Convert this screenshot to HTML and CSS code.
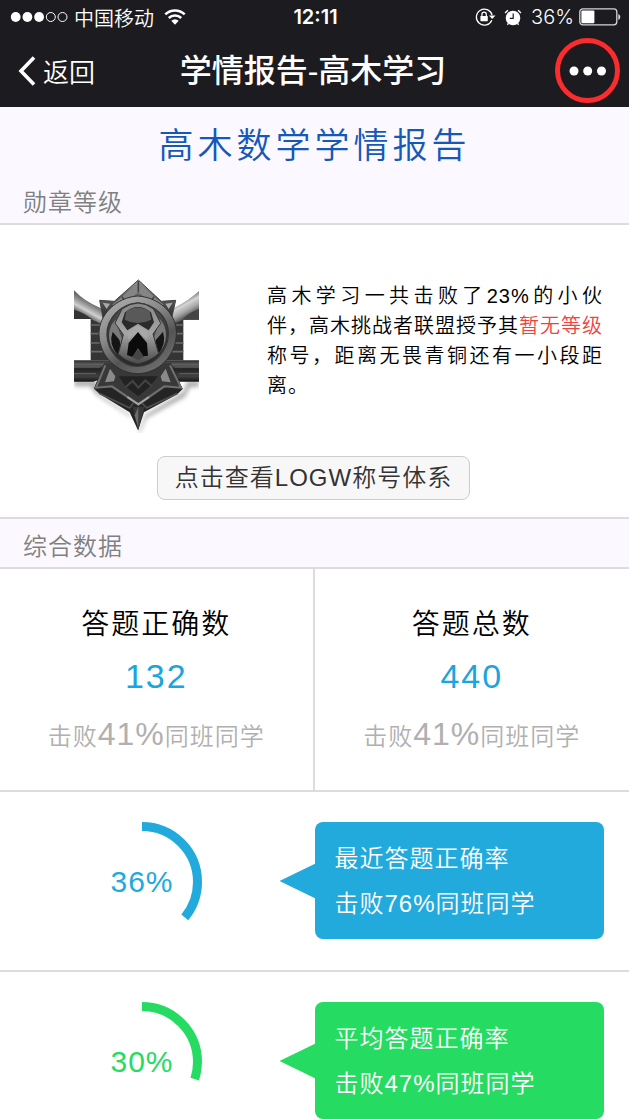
FILE: index.html
```html
<!DOCTYPE html>
<html lang="zh-CN">
<head>
<meta charset="utf-8">
<meta name="viewport" content="width=device-width, initial-scale=1">
<title>学情报告-高木学习</title>
<link rel="stylesheet" href="styles.css">
</head>
<body>
<header class="topbar">
  <div class="status">
    <div class="status-left">
      <svg class="signal" width="59" height="12" viewBox="0 0 59 12" aria-hidden="true">
        <g fill="#fff"><circle cx="5.7" cy="6" r="4.9"/><circle cx="17.4" cy="6" r="4.9"/><circle cx="29.1" cy="6" r="4.9"/></g>
        <g fill="none" stroke="#fff"><circle cx="40.8" cy="6" r="4.5"/><circle cx="52.5" cy="6" r="4.5"/></g>
      </svg>
      <span>中国移动</span>
      <svg width="22" height="16" viewBox="0 0 22 16" aria-hidden="true">
        <g fill="none" stroke="#fff" stroke-width="2.5"><path d="M1.3 5.4a13.8 13.8 0 0 1 19.4 0"/><path d="M4.8 9a8.8 8.8 0 0 1 12.4 0"/></g>
        <path d="M11 15.7 7.3 11.7a5.3 5.3 0 0 1 7.4 0z" fill="#fff"/>
      </svg>
    </div>
    <time class="clock">12:11</time>
    <div class="status-right">
      <svg class="lock" width="21" height="18" viewBox="0 0 21 18" aria-hidden="true">
        <path d="M16.8 12.2A8 8 0 1 1 17.1 7" fill="none" stroke="#fff" stroke-width="1.3"/>
        <path d="M14 7.5h6.5L17.2 11z" fill="#fff"/>
        <rect x="5.4" y="8" width="7.4" height="5.2" rx=".6" fill="#fff"/>
        <path d="M6.9 8V6.4a2.2 2.2 0 0 1 4.4 0V8" fill="none" stroke="#fff" stroke-width="1.2"/>
      </svg>
      <svg class="alarm" width="18" height="17" viewBox="0 0 18 17" aria-hidden="true">
        <circle cx="9" cy="9" r="7.3" fill="#fff"/>
        <path d="M1.2 4.1A9 9 0 0 1 4 1.4M16.8 4.1A9 9 0 0 0 14 1.4" stroke="#fff" stroke-width="1.4" fill="none"/>
        <path d="M4.4 14.4l-1 1.3M13.6 14.4l1 1.3" stroke="#fff" stroke-width="1.4"/>
        <path d="M9.2 4.5v4.8H5.8" fill="none" stroke="#1c1b20" stroke-width="1.2"/>
      </svg>
      <span>36%</span>
      <svg width="42" height="18" viewBox="0 0 42 18" aria-hidden="true">
        <rect x=".8" y=".8" width="37" height="16" rx="3" fill="none" stroke="#d5d5d7" stroke-width="1.3"/>
        <path d="M39.3 6c2.6 1 2.6 5 0 6z" fill="#d5d5d7"/>
        <rect x="2.4" y="2.6" width="13" height="12.6" rx="1" fill="#fff"/>
      </svg>
    </div>
  </div>
  <nav class="nav">
    <a class="back" href="#">
      <svg width="18" height="30" viewBox="0 0 18 30" aria-hidden="true"><path d="M16 1.5 3 15l13 13.5" fill="none" stroke="#fff" stroke-width="3.6"/></svg>
      <span>返回</span>
    </a>
    <h1 class="nav-title">学情报告-高木学习</h1>
    <button class="more" type="button" aria-label="更多">
      <svg width="38" height="10" viewBox="0 0 38 10" aria-hidden="true"><g fill="#fff"><circle cx="5" cy="5" r="4.5"/><circle cx="18.7" cy="5" r="4.5"/><circle cx="32.5" cy="5" r="4.5"/></g></svg>
    </button>
  </nav>
</header>
<main>
  <h2 class="report-title">高木数学学情报告</h2>
  <h3 class="section-head">勋章等级</h3>
  <section class="medal">
    <div class="medal-body">
      <svg class="badge" viewBox="72 55 375 465" role="img" aria-label="徽章">
        <defs>
          <linearGradient id="steel" x1="0" y1="0" x2="0" y2="1"><stop offset="0" stop-color="#999"/><stop offset=".45" stop-color="#5a5a5a"/><stop offset="1" stop-color="#292929"/></linearGradient>
          <linearGradient id="ring" x1="0" y1="0" x2=".6" y2="1"><stop offset="0" stop-color="#b5b5b5"/><stop offset=".45" stop-color="#8a8a8a"/><stop offset=".75" stop-color="#555"/><stop offset="1" stop-color="#6a6a6a"/></linearGradient>
          <linearGradient id="bladeL" gradientUnits="userSpaceOnUse" x1="130" y1="118" x2="100" y2="172"><stop offset="0" stop-color="#444"/><stop offset=".35" stop-color="#8a8a8a"/><stop offset=".65" stop-color="#d0d0d0"/><stop offset="1" stop-color="#444"/></linearGradient>
          <linearGradient id="bladeR" gradientUnits="userSpaceOnUse" x1="390" y1="118" x2="420" y2="172"><stop offset="0" stop-color="#555"/><stop offset=".35" stop-color="#d5d5d5"/><stop offset=".65" stop-color="#a5a5a5"/><stop offset="1" stop-color="#444"/></linearGradient>
          <linearGradient id="bar" x1="0" y1="0" x2="0" y2="1"><stop offset="0" stop-color="#2a2a2a"/><stop offset=".2" stop-color="#606060"/><stop offset=".4" stop-color="#222"/><stop offset=".75" stop-color="#404040"/><stop offset="1" stop-color="#151515"/></linearGradient>
          <radialGradient id="orb" cx=".5" cy=".3" r=".7"><stop offset="0" stop-color="#777"/><stop offset=".5" stop-color="#484848"/><stop offset="1" stop-color="#262626"/></radialGradient>
          <linearGradient id="mark" x1="0" y1="0" x2="0" y2="1"><stop offset="0" stop-color="#858585"/><stop offset=".5" stop-color="#a5a5a5"/><stop offset="1" stop-color="#4a4a4a"/></linearGradient>
          <filter id="soft" x="-20%" y="-20%" width="140%" height="140%"><feGaussianBlur stdDeviation="6"/></filter>
        </defs>
        <path d="M72 362H138L150 404 240 465 266 516 286 465 400 396 412 364H447V382H420L405 412 290 475 268 522 246 475 140 406 120 380H72z" fill="#777" opacity=".6" filter="url(#soft)"/>
        <path d="M122 150H400V302H122z" fill="#353535"/>
        <path d="M122 196h36M122 222h30M122 250h30M122 276h36M400 196h-36M400 222h-30M400 250h-30M400 276h-36" stroke="#6a6a6a" stroke-width="5"/>
        <path d="M72 302H447V366H390L350 350H176L130 366H72z" fill="url(#bar)"/>
        <path d="M72 322H150M72 342H138M447 322H374M447 342H388" stroke="#666" stroke-width="3"/>
        <path d="M72 92Q104 126 150 144L178 160 160 196 122 178H72z" fill="url(#bladeL)"/>
        <path d="M447 94Q416 122 378 142L346 160 362 196 400 180H447z" fill="url(#bladeR)"/>
        <path d="M72 150Q104 160 126 178H72z" fill="#333"/>
        <path d="M447 148Q420 156 396 180H447z" fill="#444"/>
        <path d="M149 122 193 125 265 61 334 125 377 122 364 180H160z" fill="url(#steel)" stroke="#444" stroke-width="3"/>
        <path d="M187 135 265 70 341 135 320 143 265 98 208 143z" fill="#858585"/>
        <path d="M265 64V98M216 111l12 19M312 111l-12 19" stroke="#444" stroke-width="5"/>
        <path d="M158 129 180 132 170 148zM368 129 346 132 356 148z" fill="#aaa"/>
        <path d="M163 310 132 387 149 403 239 458 264 512 282 458 382 404 398 388 362 310z" fill="#242424"/>
        <path d="M163 310 132 387 183 384 265 440 347 383 398 388 362 310z" fill="#383838"/>
        <path d="M166 317 138 384 186 380 265 434 343 380 393 384 360 317" fill="none" stroke="#707070" stroke-width="6"/>
        <path d="M232 412 265 434 297 412" fill="none" stroke="#a5a5a5" stroke-width="6"/>
        <path d="M180 327 165 368 192 365 196 350zM347 327 362 368 336 365 332 350z" fill="#8a8a8a"/>
        <path d="M206 350H324L300 380 265 410 226 380z" fill="#222"/>
        <path d="M226 383 248 364 265 384 286 362 306 380" fill="none" stroke="#444" stroke-width="6"/>
        <path d="M147 401 239 445 250 430M383 401 290 445 276 430" fill="none" stroke="#505050" stroke-width="5"/>
        <path d="M248 441H283L265 512z" fill="#383838"/><path d="M265 441V506L254 467z" fill="#6b6b6b"/>
        <path d="M263 109C330 113 383 165 379 226C375 292 324 341 263 342C203 341 150 292 147 227C144 164 201 113 263 109z" fill="url(#ring)" stroke="#303030" stroke-width="3"/>
        <path d="M263 130C314 134 357 173 355 224C353 274 313 319 263 320C212 319 173 275 171 226C170 174 213 134 263 130z" fill="url(#orb)" stroke="#383838" stroke-width="4"/>
        <path d="M200 178C166 203 172 265 206 286L218 242 206 211zM328 178C359 203 352 265 320 286L308 242 320 211z" fill="#7a7a7a"/>
        <path d="M188 216 208 240 212 256 204 286Q174 254 188 216zM339 216 318 240 312 256 322 286Q351 254 339 216z" fill="#151515"/>
        <path d="M216 148Q264 112 311 148L332 191 309 223 326 282Q300 305 265 313Q225 306 205 282L220 225 195 190z" fill="url(#mark)" stroke="#343434" stroke-width="3"/>
        <path d="M225 158Q264 126 303 158L312 188 296 212 264 192 232 212 215 188z" fill="#2a2a2a"/>
        <path d="M229 154Q264 133 299 155L304 180Q262 200 224 180z" fill="#595959"/>
        <path d="M238 214 264 196 290 214 294 240 264 216 234 240z" fill="#a8a8a8"/>
        <path d="M236 250 264 217 291 250 294 288 280 290 264 266 248 292 231 286z" fill="#0b0b0b"/>
        <path d="M246 292 264 268 282 292 264 302z" fill="#454545"/>
      </svg>
      <p class="medal-text">高木学习一共击败了23%的小伙伴，高木挑战者联盟授予其<em class="rank">暂无等级</em>称号，距离无畏青铜还有一小段距离。</p>
    </div>
    <button class="rank-button" type="button">点击查看LOGW称号体系</button>
  </section>
  <h3 class="section-head section-head-lined">综合数据</h3>
  <section class="stats">
    <div class="stat">
      <h4 class="stat-name">答题正确数</h4>
      <p class="stat-value">132</p>
      <p class="stat-note">击败<span class="stat-percent">41%</span>同班同学</p>
    </div>
    <div class="stat">
      <h4 class="stat-name">答题总数</h4>
      <p class="stat-value">440</p>
      <p class="stat-note">击败<span class="stat-percent">41%</span>同班同学</p>
    </div>
  </section>
  <section class="rate rate-recent">
    <div class="gauge">
      <svg class="arc" viewBox="0 0 120 120" aria-hidden="true"><circle cx="60" cy="60" r="55.5" pathLength="100" stroke-dasharray="36 64" transform="rotate(-90 60 60)"/></svg>
      <span class="gauge-value">36%</span>
    </div>
    <div class="bubble"><p>最近答题正确率</p><p>击败76%同班同学</p></div>
  </section>
  <section class="rate rate-average">
    <div class="gauge">
      <svg class="arc" viewBox="0 0 120 120" aria-hidden="true"><circle cx="60" cy="60" r="55.5" pathLength="100" stroke-dasharray="30 70" transform="rotate(-90 60 60)"/></svg>
      <span class="gauge-value">30%</span>
    </div>
    <div class="bubble"><p>平均答题正确率</p><p>击败47%同班同学</p></div>
  </section>
</main>
</body>
</html>
```
FILE: styles.css
```css
* { box-sizing: border-box; }
body, h1, h2, h3, h4, p { margin: 0; }
body {
  background: #fff;
  color: #000;
  font-family: "Liberation Sans", "Noto Sans CJK SC", sans-serif;
  font-size: 24px;
  font-weight: 350;
  letter-spacing: 1px;
}
h1, h2, h3, h4 { font-weight: inherit; }
svg { display: block; flex: none; }
button { font: inherit; letter-spacing: inherit; cursor: pointer; }

.topbar { background: #1c1b20; color: #fff; letter-spacing: 0; }
.status {
  display: grid;
  grid-template-columns: 1fr auto 1fr;
  align-items: center;
  height: 34px;
  padding: 0 8px 0 10px;
  font-family: Inter, "Noto Sans CJK SC", sans-serif;
  font-size: 20px;
}
.status-left, .status-right { display: flex; align-items: center; }
.status-left { gap: 10px; }
.signal { margin-right: -5px; }
.status-right { justify-content: flex-end; gap: 5px; }
.lock { margin-right: 3px; }
.alarm { margin-right: 4px; }
.clock { font-weight: 600; }
.nav {
  display: grid;
  grid-template-columns: 1fr auto 1fr;
  align-items: center;
  height: 73px;
  padding: 0 9px 0 18px;
}
.back {
  display: flex;
  align-items: center;
  gap: 7px;
  color: #fff;
  font-size: 26px;
  text-decoration: none;
}
.nav-title { margin-right: 12px; font-size: 32px; font-weight: 500; line-height: 40px; }
.more {
  display: flex;
  align-items: center;
  justify-content: center;
  justify-self: end;
  width: 65px;
  height: 65px;
  padding: 0;
  border: 5px solid #fb2c2d;
  border-radius: 50%;
  background: none;
}

.report-title {
  padding: 14px 0 12px;
  background: #fbf9ff;
  color: #1558b8;
  font-size: 35px;
  line-height: 50px;
  letter-spacing: 4px;
  text-align: center;
}
.section-head {
  padding: 0 23px;
  border-bottom: 2px solid #dcdcdc;
  background: #fbf9ff;
  color: #808080;
  font-size: 24px;
  line-height: 40px;
}
.section-head-lined { padding-top: 8px; border-top: 2px solid #dcdcdc; }

.medal { padding: 53px 26px 17px 24px; }
.medal-body {
  display: grid;
  grid-template-columns: 125px 1fr;
  gap: 68px;
  padding-left: 50px;
}
.badge { width: 125px; height: 155px; }
.medal-text { padding-top: 3px; font-size: 20px; line-height: 30px; text-align: justify; }
.rank { color: #f04141; font-style: normal; }
.rank-button {
  display: block;
  margin: 23px auto 0;
  padding: 0 17px;
  border: 1px solid #ccc;
  border-radius: 8px;
  background: #f7f7f7;
  color: #333;
  line-height: 42px;
}

.stats {
  display: grid;
  grid-template-columns: 1fr 1fr;
  border-bottom: 2px solid #dcdcdc;
  text-align: center;
}
.stat { padding: 34px 0 21px; }
.stat:first-child { border-right: 2px solid #dcdcdc; }
.stat-name { font-size: 28px; line-height: 44px; letter-spacing: 2px; }
.stat-value { color: #1ba5dc; font-size: 34px; line-height: 58px; letter-spacing: 2px; }
.stat-note { color: #b0b0b0; line-height: 64px; }
.stat-percent { font-size: 32px; line-height: 1; }

.rate { display: grid; grid-template-columns: 1fr 1fr; padding: 30px 0 28px; }
.rate + .rate { padding-bottom: 0; border-top: 2px solid #dcdcdc; }
.rate-recent { --tone: #22aadd; }
.rate-average { --tone: #26db61; }
.gauge { display: grid; justify-content: start; height: 120px; padding-left: 82px; }
.rate-average .gauge { height: 117px; }
.gauge > * { grid-area: 1 / 1; }
.arc { width: 120px; height: 120px; fill: none; stroke: var(--tone); stroke-width: 9; }
.gauge-value { place-self: center; color: var(--tone); font-size: 30px; }
.bubble {
  position: relative;
  align-self: start;
  margin-right: 25px;
  padding: 14px 20px 13px;
  border-radius: 8px;
  background: var(--tone);
  color: #fff;
  line-height: 45px;
}
.bubble::before {
  content: "";
  position: absolute;
  top: 41px;
  left: -35px;
  width: 37px;
  height: 36px;
  background: var(--tone);
  clip-path: polygon(0 50%, 100% 0, 100% 100%);
}
```
